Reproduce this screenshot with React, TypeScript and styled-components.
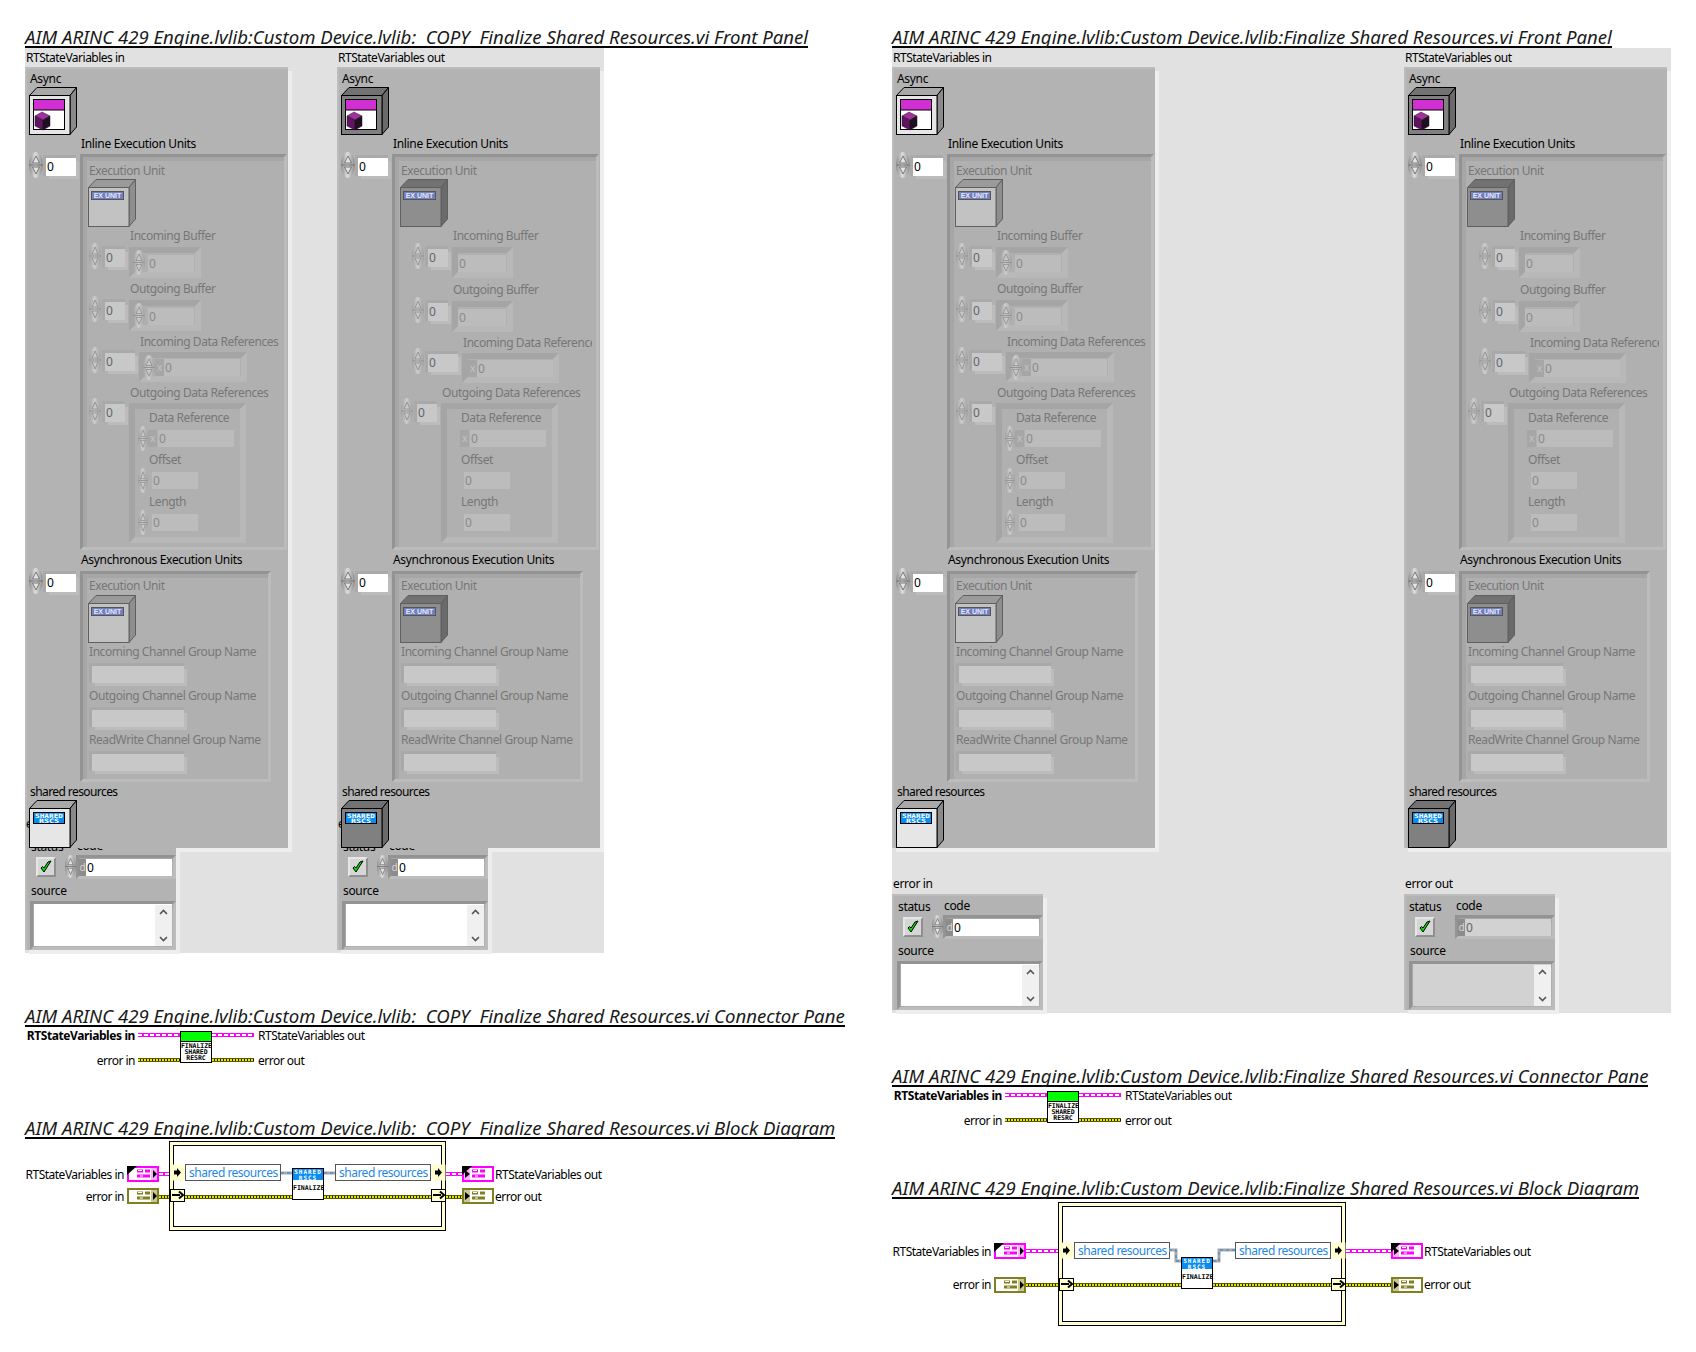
import React from "react";
import styled, { createGlobalStyle, css } from "styled-components";

const GlobalStyle = createGlobalStyle`
  html, body {
    margin: 0;
    background: #fff;
  }
  body {
    font-family: "Noto Sans", "DejaVu Sans", sans-serif;
    font-size: 12px;
    letter-spacing: -0.33px;
    color: #000;
  }
`;

interface XY {
  $x: number;
  $y: number;
}

interface Box extends XY {
  $w: number;
  $h: number;
}

const at = css<XY>`
  position: absolute;
  left: ${(p) => p.$x}px;
  top: ${(p) => p.$y}px;
`;

const sized = css<Box>`
  ${at}
  width: ${(p) => p.$w}px;
  height: ${(p) => p.$h}px;
`;

const Page = styled.div`
  display: flex;
  width: 1696px;
  height: 1352px;
  padding: 24px 0 0 25px;
  box-sizing: border-box;
  overflow: hidden;
`;

const Column = styled.div`
  width: 867px;
  flex: none;
`;

const Title = styled.h2<{ $top?: number }>`
  width: fit-content;
  margin: ${(p) => p.$top ?? 0}px 0 0;
  height: 24px;
  box-sizing: border-box;
  border-bottom: 2px solid #000;
  font-size: 18.6px;
  font-style: italic;
  font-weight: 400;
  line-height: 26px;
  letter-spacing: 0;
  white-space: pre;
  color: #1a1a1a;
`;

const FrontPanel = styled.div<{ $w: number; $h: number; $gap: number }>`
  display: flex;
  gap: ${(p) => p.$gap}px;
  width: ${(p) => p.$w}px;
  height: ${(p) => p.$h}px;
  background: #e1e1e1;
  isolation: isolate;
`;

const Stack = styled.div`
  display: flex;
  flex-direction: column;
  width: 267px;
  flex: none;
`;

const ClusterCaption = styled.div`
  height: 19px;
  line-height: 20px;
  padding-left: 1px;
  letter-spacing: -0.5px;
  white-space: nowrap;
`;

const Cluster = styled.div`
  position: relative;
  width: 263px;
  height: 781px;
  flex: none;
  background: #b3b3b3;
  box-shadow: inset 2px 2px 0 #bcbcbc;

  /* the light rim sits under the error cluster, the body over it */
  &::before {
    content: "";
    position: absolute;
    inset: 0;
    z-index: -2;
    box-shadow: 4px 4px 0 #eeeeee;
  }
`;

const Label = styled.span<XY & { $dim?: boolean; $clip?: number; $tight?: boolean }>`
  ${at}
  margin-top: -8px;
  height: 16px;
  line-height: 16px;
  white-space: nowrap;
  letter-spacing: ${(p) => (p.$tight ? "-0.58px" : p.$dim ? "-0.43px" : "-0.33px")};
  color: ${(p) => (p.$dim ? "#777" : "#000")};
  ${(p) => p.$clip && `max-width: ${p.$clip}px; overflow: hidden;`}
`;

const Recess = styled.div<Box>`
  ${sized}
  box-sizing: border-box;
  border: 3px solid;
  border-color: #939393 #bcbcbc #bcbcbc #939393;
  background: #b0b0b0;
  box-shadow: inset 4px 4px 0 #a6a6a6, inset -4px -4px 0 #b0b0b0;
`;

const NestedRecess = styled.div<Box>`
  ${sized}
  box-sizing: border-box;
  border: 6px solid;
  border-color: #a5a5a5 #b8b8b8 #b8b8b8 #a5a5a5;
  background: #b0b0b0;
`;

const fieldTones = {
  white: "#fff",
  light: "#c8c8c8",
  muted: "#bcbcbc",
  grey: "#d2d2d2",
};

const Field = styled.div<Box & { $tone: keyof typeof fieldTones; $ring?: boolean }>`
  ${sized}
  padding-left: 1px;
  box-sizing: border-box;
  background: ${(p) => fieldTones[p.$tone]};
  line-height: 17px;
  font-size: 12px;
  color: ${(p) => (p.$tone === "muted" ? "#8a8a8a" : p.$tone === "white" ? "#000" : "#5d6670")};
  ${(p) => p.$ring && "box-shadow: 3px 3px 0 #bcbcbc, -3px 0 0 #a9a9a9, 0 -3px 0 #a9a9a9, -3px -3px 0 #a9a9a9;"}
`;

const RadixTag = styled.div<Box & { $dark?: boolean }>`
  ${sized}
  text-align: center;
  font-size: 10px;
  line-height: 16px;
  background: ${(p) => (p.$dark ? "#8c8c8c" : "#a6a6a6")};
  color: ${(p) => (p.$dark ? "#d6d6d6" : "#c4c4c4")};
`;

const SpinPill = styled.div<Box & { $dim?: boolean }>`
  ${sized}
  border-radius: 50%;
  background: ${(p) =>
    p.$dim
      ? "linear-gradient(90deg, #a0a0a0, #cdcdcd 45%, #a0a0a0)"
      : "linear-gradient(90deg, #8c8c8c, #dedede 45%, #8c8c8c)"};
  svg {
    display: block;
    width: 100%;
    height: 100%;
  }
`;

const CubeArt = styled.svg<XY & { $front?: boolean }>`
  ${at}
  width: 48px;
  height: 48px;
  letter-spacing: 0;
  z-index: ${(p) => (p.$front ? 2 : "auto")};
`;

const ErrorBlock = styled.div<{ $top: number }>`
  margin-top: ${(p) => p.$top}px;
`;

const ErrorCaption = styled.div`
  position: relative;
  z-index: 1;
  height: 18px;
  line-height: 16px;
  padding-left: 1px;
  white-space: nowrap;
`;

const ErrorCluster = styled.div`
  position: relative;
  z-index: -1;
  width: 151px;
  height: 116px;
  background: #b3b3b3;
  box-shadow: inset 2px 2px 0 #bcbcbc, 4px 4px 0 #eeeeee;
`;

const CheckButton = styled.div<XY>`
  ${at}
  width: 20px;
  height: 20px;
  box-sizing: border-box;
  background: #d6d6d6;
  border: 2px solid;
  border-color: #e6e6e6 #8f8f8f #8f8f8f #e6e6e6;
  svg {
    display: block;
    width: 16px;
    height: 16px;
  }
`;

const ScrollRail = styled.div<Box>`
  ${sized}
  display: flex;
  flex-direction: column;
  justify-content: space-between;
  align-items: center;
  padding: 4px 0;
  box-sizing: border-box;
  background: #f0f0f0;
`;

const ConnectorGrid = styled.div`
  display: grid;
  grid-template-columns: 110px 3px 42px 32px 42px 4px auto;
  grid-template-rows: 16px 16px;
  row-gap: 9px;
  align-items: center;
  margin-bottom: 47px;
`;

const PinLabel = styled.span<{ $bold?: boolean; $left?: boolean }>`
  font-weight: ${(p) => (p.$bold ? 700 : 400)};
  white-space: nowrap;
  text-align: ${(p) => (p.$left ? "left" : "right")};
  letter-spacing: ${(p) => (p.$bold ? "-0.4px" : "-0.5px")};
`;

const wireKinds = {
  state: css`
    height: 2px;
    border-top: 1px solid #ff00ff;
    border-bottom: 1px solid #ff00ff;
    background: repeating-linear-gradient(90deg, #fff 0 4px, #ff00ff 4px 6px);
  `,
  error: css`
    height: 2px;
    border-top: 1px solid #5c5c00;
    border-bottom: 1px solid #5c5c00;
    background: repeating-linear-gradient(90deg, #e8e800 0 2px, #1c1c00 2px 3px);
  `,
};

const Wire = styled.div<{ $kind: keyof typeof wireKinds; $column?: number }>`
  ${(p) => wireKinds[p.$kind]}
  ${(p) => p.$column && `grid-column: ${p.$column};`}
`;

const PlacedWire = styled(Wire)<XY & { $w: number }>`
  ${at}
  width: ${(p) => p.$w}px;
`;

const ConnectorIcon = styled.div`
  grid-column: 4;
  grid-row: 1 / 3;
  align-self: start;
  margin-top: 4px;
  width: 32px;
  height: 32px;
  box-sizing: border-box;
  border: 1px solid #000;
  background: #fff;
  font: 700 6.5px/6.2px "DejaVu Sans Mono", monospace;
  letter-spacing: -0.05px;
  text-align: center;
  color: #000;
  overflow: hidden;
`;

const GreenBand = styled.div`
  height: 9px;
  margin-bottom: 1px;
  background: #00ff00;
  border-bottom: 1px solid #000;
`;

const Diagram = styled.div<{ $h: number }>`
  position: relative;
  height: ${(p) => p.$h}px;
`;

const Loop = styled.div<Box>`
  ${sized}
  box-sizing: border-box;
  border: 1px solid #000;
  background: #fff;
  box-shadow: inset 0 0 0 3px #ffffd0, inset 0 0 0 4px #000;
`;

const DiagramLabel = styled.span<XY & { $alignEnd?: boolean }>`
  ${at}
  margin-top: -8px;
  line-height: 16px;
  letter-spacing: -0.5px;
  white-space: nowrap;
  ${(p) => p.$alignEnd && "transform: translateX(-100%);"}
`;

const ClusterField = styled.div<XY>`
  ${at}
  width: 96px;
  height: 17px;
  box-sizing: border-box;
  border: 1px solid #555;
  background: #fff;
  padding-left: 3px;
  font-size: 12px;
  line-height: 15px;
  letter-spacing: -0.5px;
  color: #1e88e5;
  white-space: nowrap;
`;

const Glyph = styled.svg<XY>`
  ${at}
`;

const SubVI = styled.div<XY>`
  ${at}
  width: 32px;
  height: 32px;
  box-sizing: border-box;
  border: 1px solid #000;
  background: #fff;
  text-align: center;
  letter-spacing: 0;
`;

const SubVIBand = styled.div`
  height: 11px;
  background: #0a8cf0;
  color: #fff;
  font: 700 6px/5.5px "DejaVu Sans Mono", monospace;
  letter-spacing: 1px;
`;

const SubVIText = styled.div`
  margin-top: 4px;
  font: 700 6.5px/9px "DejaVu Sans Mono", monospace;
`;

const Spinner = ({ x, y, w = 12, h = 26, dim }: { x: number; y: number; w?: number; h?: number; dim?: boolean }) => {
  const ink = dim ? "#8e8e8e" : "#6e6e6e";
  return (
    <SpinPill $x={x} $y={y} $w={w} $h={h} $dim={dim}>
      <svg viewBox="0 0 14 26" preserveAspectRatio="none">
        <path d="M3.5 11 L7 4 L10.5 11 Z M3.5 15 L7 22 L10.5 15 Z" fill={dim ? "#c8c8c8" : "#e4e4e4"} stroke={ink} strokeWidth="0.9" />
        <path d="M0.5 13 H13.5" stroke={ink} strokeWidth="1" />
      </svg>
    </SpinPill>
  );
};

type CubeKind = "async" | "unit" | "shared";

const Cube = ({ x, y, kind, dark, front }: { x: number; y: number; kind: CubeKind; dark?: boolean; front?: boolean }) => {
  const dim = kind === "unit";
  const edge = dim ? "#5f5f5f" : "#000";
  const face = dark ? (dim ? "#8e8e8e" : "#808080") : dim ? "#c2c2c2" : "#e6e6e6";
  const top = dark ? "#727272" : dim ? "#9a9a9a" : "#a8a8a8";
  const side = dark ? "#6a6a6a" : dim ? "#8e8e8e" : "#8a8a8a";
  return (
    <CubeArt $x={x} $y={y} $front={front} viewBox="0 0 48 48">
      <polygon points="0.5,8.5 8,0.5 47.5,0.5 41,8.5" fill={top} stroke={edge} />
      <polygon points="41,8.5 47.5,0.5 47.5,40 41,47.5" fill={side} stroke={edge} />
      <rect x="0.5" y="8.5" width="40.5" height="39" fill={face} stroke={edge} />
      {kind === "async" && (
        <>
          <rect x="4.5" y="12.5" width="31" height="30" fill="#fff" stroke="#000" />
          <rect x="5" y="13" width="30" height="10" fill="#d22fd2" />
          <rect x="4.5" y="22.5" width="31" height="1" fill="#000" />
          <polygon points="6,29 13,25 21,29 14,33" fill="#a0329f" stroke="#2a0a2a" strokeWidth="0.5" />
          <polygon points="6,29 14,33 14,43 6,39" fill="#5e145e" stroke="#2a0a2a" strokeWidth="0.5" />
          <polygon points="14,33 21,29 21,39 14,43" fill="#1f1020" stroke="#2a0a2a" strokeWidth="0.5" />
        </>
      )}
      {kind === "unit" && (
        <>
          <rect x="3.5" y="12.5" width="32" height="8" fill="#6f7fbf" stroke="#555" />
          <text x="19.5" y="19" textAnchor="middle" fontSize="7" fontWeight="700" fill="#e8e8f4" fontFamily="Liberation Sans, sans-serif">
            EX UNIT
          </text>
        </>
      )}
      {kind === "shared" && (
        <>
          <rect x="4.5" y="12.5" width="31" height="11" fill="#0a8cf0" stroke="#000" />
          <text x="20" y="18" textAnchor="middle" fontSize="6" fontWeight="700" fill="#fff" fontFamily="DejaVu Sans Mono, monospace" textLength="28" lengthAdjust="spacingAndGlyphs">
            SHARED
          </text>
          <text x="20" y="23.2" textAnchor="middle" fontSize="6" fontWeight="700" fill="#fff" fontFamily="DejaVu Sans Mono, monospace" textLength="20" lengthAdjust="spacingAndGlyphs">
            RSCS
          </text>
        </>
      )}
    </CubeArt>
  );
};

const StateCluster = ({ out, narrow }: { out?: boolean; narrow?: boolean }) => {
  const num = (x: number, y: number, w: number) => <Field $x={x} $y={y} $w={w} $h={18} $tone="light" $ring>0</Field>;
  const rowX = narrow ? 11 : 0;
  const dy = narrow ? 1 : 0;
  return (
    <Cluster>
      <Label $x={5} $y={12}>Async</Label>
      <Cube x={4} y={20} kind="async" dark={out} />

      <Label $x={56} $y={77}>Inline Execution Units</Label>
      <Spinner x={4} y={85} w={14} />
      <Field $x={21} $y={91} $w={30} $h={18} $tone="white" $ring>0</Field>

      <Recess $x={55} $y={87} $w={207} $h={396} />
      <Label $x={64} $y={104} $dim>Execution Unit</Label>
      <Cube x={63} y={112} kind="unit" dark={out} />

      <Label $x={105 + rowX} $y={169} $dim>Incoming Buffer</Label>
      <Spinner x={64 + rowX} y={176} dim />
      {num(80 + rowX, 182, 20)}
      <NestedRecess $x={104 + rowX} $y={180} $w={72 - rowX} $h={31} />
      {!narrow && <Spinner x={108} y={183} h={25} dim />}
      <Field $x={narrow ? 121 : 123} $y={188} $w={narrow ? 48 : 46} $h={17} $tone="muted">0</Field>

      <Label $x={105 + rowX} $y={222 + dy} $dim>Outgoing Buffer</Label>
      <Spinner x={64 + rowX} y={229 + dy} dim />
      {num(80 + rowX, 235 + dy, 20)}
      <NestedRecess $x={104 + rowX} $y={233 + dy} $w={72 - rowX} $h={31} />
      {!narrow && <Spinner x={108} y={236} h={25} dim />}
      <Field $x={narrow ? 121 : 123} $y={241 + dy} $w={narrow ? 48 : 46} $h={17} $tone="muted">0</Field>

      <Label $x={115 + rowX} $y={275 + dy} $dim $clip={narrow ? 129 : undefined}>Incoming Data References</Label>
      <Spinner x={64 + rowX} y={280 + dy} dim />
      {num(80 + rowX, 286 + dy, 30)}
      <NestedRecess $x={114 + rowX} $y={285 + dy} $w={108 - rowX} $h={30} />
      {!narrow && <Spinner x={118} y={288} h={25} dim />}
      <RadixTag $x={130 + (narrow ? 1 : 0)} $y={292 + dy} $w={9} $h={17}>x</RadixTag>
      <Field $x={139 + (narrow ? 1 : 0)} $y={292 + dy} $w={76} $h={17} $tone="muted">0</Field>

      <Label $x={105} $y={326} $dim>Outgoing Data References</Label>
      <Spinner x={64} y={331} dim />
      {num(80, 337, 20)}
      <NestedRecess $x={104} $y={336} $w={117} $h={140} />
      <Label $x={124} $y={351} $dim>Data Reference</Label>
      {!narrow && <Spinner x={113} y={359} w={10} h={25} dim />}
      <RadixTag $x={123} $y={363} $w={9} $h={17}>x</RadixTag>
      <Field $x={133} $y={363} $w={76} $h={17} $tone="muted">0</Field>
      <Label $x={124} $y={393} $dim>Offset</Label>
      {!narrow && <Spinner x={113} y={401} w={10} h={25} dim />}
      <Field $x={127} $y={405} $w={46} $h={17} $tone="muted">0</Field>
      <Label $x={124} $y={435} $dim>Length</Label>
      {!narrow && <Spinner x={113} y={443} w={10} h={25} dim />}
      <Field $x={127} $y={447} $w={46} $h={17} $tone="muted">0</Field>

      <Label $x={56} $y={493}>Asynchronous Execution Units</Label>
      <Spinner x={4} y={501} w={14} />
      <Field $x={21} $y={507} $w={30} $h={18} $tone="white" $ring>0</Field>

      <Recess $x={55} $y={504} $w={191} $h={211} />
      <Label $x={64} $y={519} $dim>Execution Unit</Label>
      <Cube x={63} y={528} kind="unit" dark={out} />
      <Label $x={64} $y={585} $dim>Incoming Channel Group Name</Label>
      <Field $x={67} $y={599} $w={92} $h={17} $tone="light" $ring />
      <Label $x={64} $y={629} $dim>Outgoing Channel Group Name</Label>
      <Field $x={67} $y={643} $w={92} $h={17} $tone="light" $ring />
      <Label $x={64} $y={673} $dim>ReadWrite Channel Group Name</Label>
      <Field $x={67} $y={687} $w={92} $h={17} $tone="light" $ring />

      <Label $x={5} $y={725} $tight>shared resources</Label>
      <Cube x={4} y={733} kind="shared" dark={out} front />
    </Cluster>
  );
};

const Chevron = ({ down }: { down?: boolean }) => (
  <svg width="9" height="6" viewBox="0 0 9 6">
    <path d={down ? "M1 1 L4.5 4.5 L8 1" : "M1 5 L4.5 1.5 L8 5"} fill="none" stroke="#555" strokeWidth="1.6" />
  </svg>
);

const ErrorBox = ({ caption, top, indicator }: { caption: string; top: number; indicator?: boolean }) => (
  <ErrorBlock $top={top}>
    <ErrorCaption>{caption}</ErrorCaption>
    <ErrorCluster>
      <Label $x={indicator ? 5 : 6} $y={13}>status</Label>
      <Label $x={52} $y={12}>code</Label>
      <CheckButton $x={11} $y={23}>
        <svg viewBox="0 0 16 16">
          <path d="M3 9 L6 13 L13 2 L10 3 L6 9 L4.5 7.5 Z" fill="#00e000" stroke="#000" strokeWidth="1" />
        </svg>
      </CheckButton>
      {!indicator && <Spinner x={40} y={21} w={11} h={23} />}
      <Recess $x={51} $y={21} $w={100} $h={24} />
      <RadixTag $x={54} $y={25} $w={7} $h={17} $dark>d</RadixTag>
      <Field $x={61} $y={25} $w={86} $h={17} $tone={indicator ? "grey" : "white"}>0</Field>
      <Label $x={6} $y={57}>source</Label>
      <Recess $x={5} $y={67} $w={146} $h={49} />
      <Field $x={9} $y={70} $w={138} $h={42} $tone={indicator ? "grey" : "white"} />
      <ScrollRail $x={130} $y={71} $w={17} $h={41}>
        <Chevron />
        <Chevron down />
      </ScrollRail>
    </ErrorCluster>
  </ErrorBlock>
);

const Connector = () => (
  <ConnectorGrid>
    <PinLabel $bold>RTStateVariables in</PinLabel>
    <span />
    <Wire $kind="state" />
    <ConnectorIcon>
      <GreenBand />
      FINALIZE
      <br />
      SHARED
      <br />
      RESRC
    </ConnectorIcon>
    <Wire $kind="state" />
    <span />
    <PinLabel $left>RTStateVariables out</PinLabel>
    <PinLabel>error in</PinLabel>
    <span />
    <Wire $kind="error" />
    <Wire $kind="error" $column={5} />
    <span />
    <PinLabel $left>error out</PinLabel>
  </ConnectorGrid>
);

const Terminal = ({ x, y, kind, output }: { x: number; y: number; kind: "state" | "error"; output?: boolean }) => {
  const color = kind === "state" ? "#ff00ff" : "#808020";
  const tint = kind === "state" ? "#ffb0ff" : "#c8c890";
  return (
    <Glyph $x={x} $y={y} width="32" height="16" viewBox="0 0 32 16">
      <rect x="1" y="1" width="30" height="14" fill="#fff" stroke={color} strokeWidth="2" />
      <rect x={output ? 2 : 24} y="2" width="6" height="12" fill={tint} />
      <path d="M10 5 H16 M10 10 H23 M18 5 H23" stroke={color} strokeWidth="3" />
      <path d="M11 4.5 H15 M13 10 H16" stroke="#fff" strokeWidth="1" />
      <path d={output ? "M3 4 L8 8 L3 12 Z" : "M26 4 L30 8 L26 12 Z"} fill="#000" />
      {kind === "state" && <path d="M0 0 H10 L0 9 Z" fill="#000" />}
    </Glyph>
  );
};

const Tunnel = ({ x, y, h = 17, kind }: { x: number; y: number; h?: number; kind: "state" | "error" }) => (
  <Glyph $x={x} $y={y} width="15" height={h} viewBox={`0 0 15 ${h}`}>
    <rect x="0.5" y="0.5" width="14" height={h - 1} fill="#ffffd0" stroke={kind === "error" ? "#000" : "none"} />
    {kind === "state" ? (
      <path d="M4 6.5 H7 V4 L11 8.5 L7 13 V10.5 H4 Z" fill="#000" />
    ) : (
      <path d={`M2 ${h / 2 - 0.5} H10 M9 ${h / 2 - 4} L13 ${h / 2 - 0.5} L9 ${h / 2 + 3}`} fill="none" stroke="#000" strokeWidth="2" />
    )}
  </Glyph>
);

interface DiagramLayout {
  height: number;
  loop: Box;
  stateY: number;
  errorY: number;
  fieldY: number;
  termStateY: number;
  termErrorY: number;
  tunnelLeft: number;
  tunnelRight: number;
  viX: number;
  viY: number;
  outX: number;
  clusterWire: string;
  tunnelErrorY: number;
}

const ClusterWires = ({ d }: { d: string }) => (
  <Glyph $x={0} $y={0} width="560" height="100" viewBox="0 0 560 100">
    <path d={d} fill="none" stroke="#a8a8a8" strokeWidth="3" />
    <path d={d} fill="none" stroke="#1e88e5" strokeWidth="1" strokeDasharray="3 3" />
  </Glyph>
);

const BlockDiagram = ({ l }: { l: DiagramLayout }) => {
  const fieldL = l.tunnelLeft + 15;
  const fieldR = l.tunnelRight - 96;
  return (
    <Diagram $h={l.height}>
      <DiagramLabel $x={99} $y={l.stateY + 2} $alignEnd>RTStateVariables in</DiagramLabel>
      <DiagramLabel $x={99} $y={l.errorY + 1} $alignEnd>error in</DiagramLabel>
      <Terminal x={102} y={l.termStateY} kind="state" />
      <Terminal x={102} y={l.termErrorY} kind="error" />
      <PlacedWire $kind="state" $x={134} $y={l.stateY - 1} $w={l.tunnelLeft - 134} />
      <PlacedWire $kind="error" $x={134} $y={l.errorY - 1} $w={l.tunnelLeft - 134} />

      <Loop $x={l.loop.$x} $y={l.loop.$y} $w={l.loop.$w} $h={l.loop.$h} />

      <Tunnel x={l.tunnelLeft} y={l.fieldY} kind="state" />
      <ClusterField $x={fieldL} $y={l.fieldY}>shared resources</ClusterField>
      <Tunnel x={l.tunnelLeft} y={l.tunnelErrorY} h={13} kind="error" />
      <PlacedWire $kind="error" $x={fieldL} $y={l.errorY - 1} $w={l.viX - fieldL} />

      <ClusterWires d={l.clusterWire} />

      <SubVI $x={l.viX} $y={l.viY}>
        <SubVIBand>
          SHARED
          <br />
          RSCS
        </SubVIBand>
        <SubVIText>FINALIZE</SubVIText>
      </SubVI>

      <PlacedWire $kind="error" $x={l.viX + 32} $y={l.errorY - 1} $w={l.tunnelRight - l.viX - 32} />
      <ClusterField $x={fieldR} $y={l.fieldY}>shared resources</ClusterField>
      <Tunnel x={l.tunnelRight} y={l.fieldY} kind="state" />
      <Tunnel x={l.tunnelRight} y={l.tunnelErrorY} h={13} kind="error" />
      <PlacedWire $kind="state" $x={l.tunnelRight + 15} $y={l.stateY - 1} $w={l.outX - l.tunnelRight - 15} />
      <PlacedWire $kind="error" $x={l.tunnelRight + 15} $y={l.errorY - 1} $w={l.outX - l.tunnelRight - 15} />
      <Terminal x={l.outX} y={l.termStateY} kind="state" output />
      <Terminal x={l.outX} y={l.termErrorY} kind="error" output />
      <DiagramLabel $x={l.outX + 33} $y={l.stateY + 2}>RTStateVariables out</DiagramLabel>
      <DiagramLabel $x={l.outX + 33} $y={l.errorY + 1}>error out</DiagramLabel>
    </Diagram>
  );
};

const copyLayout: DiagramLayout = {
  height: 100,
  loop: { $x: 144, $y: 2, $w: 277, $h: 90 },
  stateY: 34,
  errorY: 57,
  fieldY: 25,
  termStateY: 27,
  termErrorY: 49,
  tunnelLeft: 145,
  tunnelRight: 406,
  viX: 267,
  viY: 29,
  outX: 437,
  clusterWire: "M256 34 H267 M299 34 H310",
  tunnelErrorY: 50,
};

const mainLayout: DiagramLayout = {
  height: 135,
  loop: { $x: 166, $y: 3, $w: 288, $h: 124 },
  stateY: 51,
  errorY: 85,
  fieldY: 43,
  termStateY: 44,
  termErrorY: 78,
  tunnelLeft: 167,
  tunnelRight: 439,
  viX: 289,
  viY: 58,
  outX: 499,
  clusterWire: "M277 51 H284 V62 H289 M321 62 H327 V51 H343",
  tunnelErrorY: 79,
};

const prefix = "AIM ARINC 429 Engine.lvlib:Custom Device.lvlib:";
const copyName = `${prefix}  COPY  Finalize Shared Resources.vi`;
const mainName = `${prefix}Finalize Shared Resources.vi`;

const App: React.FC = () => (
  <Page>
    <GlobalStyle />
    <Column>
      <Title>{copyName} Front Panel</Title>
      <FrontPanel $w={579} $h={905} $gap={45}>
        <Stack>
          <ClusterCaption>RTStateVariables in</ClusterCaption>
          <StateCluster />
          <ErrorBox caption="error in" top={-32} />
        </Stack>
        <Stack>
          <ClusterCaption>RTStateVariables out</ClusterCaption>
          <StateCluster out narrow />
          <ErrorBox caption="error out" top={-32} />
        </Stack>
      </FrontPanel>
      <Title $top={50}>{copyName} Connector Pane</Title>
      <Connector />
      <Title>{copyName} Block Diagram</Title>
      <BlockDiagram l={copyLayout} />
    </Column>
    <Column>
      <Title>{mainName} Front Panel</Title>
      <FrontPanel $w={779} $h={965} $gap={245}>
        <Stack>
          <ClusterCaption>RTStateVariables in</ClusterCaption>
          <StateCluster />
          <ErrorBox caption="error in" top={28} />
        </Stack>
        <Stack>
          <ClusterCaption>RTStateVariables out</ClusterCaption>
          <StateCluster out narrow />
          <ErrorBox caption="error out" top={28} indicator />
        </Stack>
      </FrontPanel>
      <Title $top={50}>{mainName} Connector Pane</Title>
      <Connector />
      <Title>{mainName} Block Diagram</Title>
      <BlockDiagram l={mainLayout} />
    </Column>
  </Page>
);

export default App;
